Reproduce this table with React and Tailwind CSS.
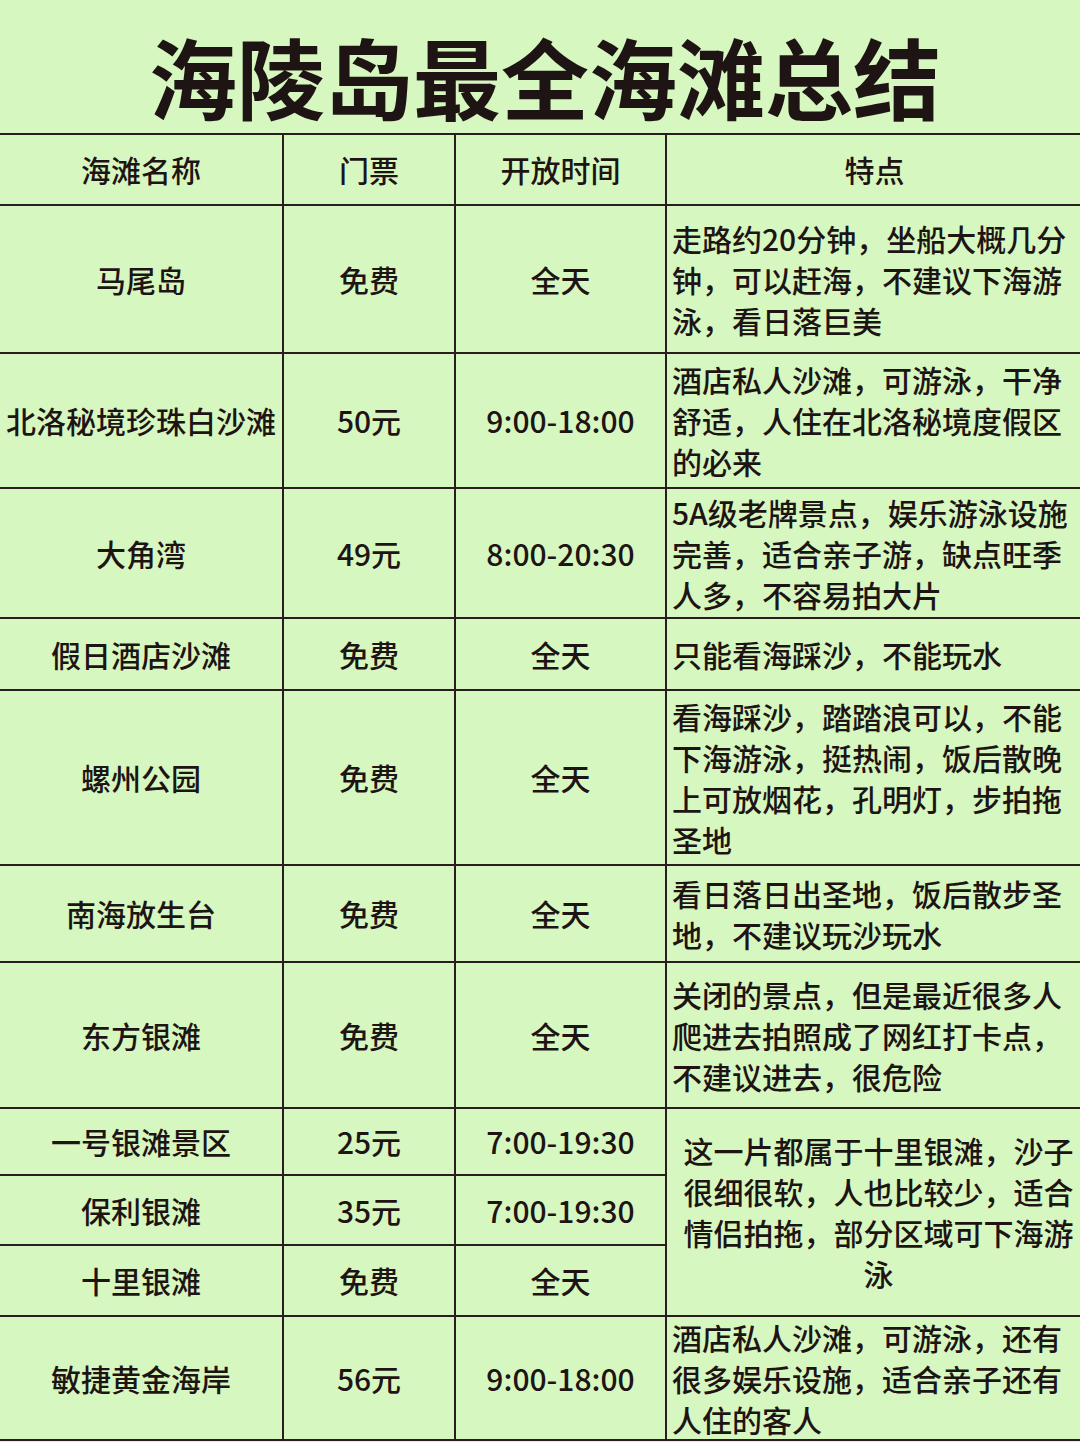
import React from "react";

const rows = [
  { name: "马尾岛", price: "免费", time: "全天", desc: ["走路约20分钟，坐船大概几分", "钟，可以赶海，不建议下海游", "泳，看日落巨美"] },
  { name: "北洛秘境珍珠白沙滩", price: "50元", time: "9:00-18:00", desc: ["酒店私人沙滩，可游泳，干净", "舒适，人住在北洛秘境度假区", "的必来"] },
  { name: "大角湾", price: "49元", time: "8:00-20:30", desc: ["5A级老牌景点，娱乐游泳设施", "完善，适合亲子游，缺点旺季", "人多，不容易拍大片"] },
  { name: "假日酒店沙滩", price: "免费", time: "全天", desc: ["只能看海踩沙，不能玩水"] },
  { name: "螺州公园", price: "免费", time: "全天", desc: ["看海踩沙，踏踏浪可以，不能", "下海游泳，挺热闹，饭后散晚", "上可放烟花，孔明灯，步拍拖", "圣地"] },
  { name: "南海放生台", price: "免费", time: "全天", desc: ["看日落日出圣地，饭后散步圣", "地，不建议玩沙玩水"] },
  { name: "东方银滩", price: "免费", time: "全天", desc: ["关闭的景点，但是最近很多人", "爬进去拍照成了网红打卡点，", "不建议进去，很危险"] },
];

const cell = "bg-[#d7f7c0] flex items-center justify-center text-center";

export default function App() {
  return (
    <div
      className="w-[1080px] h-[1442px] bg-[#d7f7c0] text-[#1e1414] overflow-hidden"
      style={{ fontFamily: '"Noto Sans CJK SC", "Noto Sans", sans-serif' }}
    >
      <div className="h-[133px] flex items-center justify-center pt-[16px] pl-[10px]">
        <h1 className="text-[88px] leading-none font-bold tracking-[0px]">海陵岛最全海滩总结</h1>
      </div>
      <div className="border-t-2 border-b-2 border-[#2b1d1d] bg-[#2b1d1d] grid gap-[2px] grid-cols-[282px_170px_209px_415px] grid-rows-[69px_146px_133px_128px_70px_173px_95px_144px_65px_68px_69px_122px] text-[30px] font-medium">
        <div className={cell}>海滩名称</div>
        <div className={cell}>门票</div>
        <div className={cell}>开放时间</div>
        <div className={cell}>特点</div>

        {rows.map((r, i) => (
          <React.Fragment key={i}>
            <div className={cell}>{r.name}</div>
            <div className={cell}>{r.price}</div>
            <div className={cell}>{r.time}</div>
            <div className="bg-[#d7f7c0] flex flex-col justify-center pl-[5px] leading-[41px]">
              {r.desc.map((l, j) => (
                <div key={j} className="whitespace-nowrap">{l}</div>
              ))}
            </div>
          </React.Fragment>
        ))}

        <div className={cell}>一号银滩景区</div>
        <div className={cell}>25元</div>
        <div className={cell}>7:00-19:30</div>
        <div className="row-span-3 bg-[#d7f7c0] flex flex-col justify-center items-center pl-[8px] leading-[41px] text-center">
          <div className="whitespace-nowrap">这一片都属于十里银滩，沙子</div>
          <div className="whitespace-nowrap">很细很软，人也比较少，适合</div>
          <div className="whitespace-nowrap">情侣拍拖，部分区域可下海游</div>
          <div className="whitespace-nowrap">泳</div>
        </div>

        <div className={cell}>保利银滩</div>
        <div className={cell}>35元</div>
        <div className={cell}>7:00-19:30</div>

        <div className={cell}>十里银滩</div>
        <div className={cell}>免费</div>
        <div className={cell}>全天</div>

        <div className={cell}>敏捷黄金海岸</div>
        <div className={cell}>56元</div>
        <div className={cell}>9:00-18:00</div>
        <div className="bg-[#d7f7c0] flex flex-col justify-center pl-[5px] leading-[41px]">
          <div className="whitespace-nowrap">酒店私人沙滩，可游泳，还有</div>
          <div className="whitespace-nowrap">很多娱乐设施，适合亲子还有</div>
          <div className="whitespace-nowrap">人住的客人</div>
        </div>
      </div>
    </div>
  );
}
